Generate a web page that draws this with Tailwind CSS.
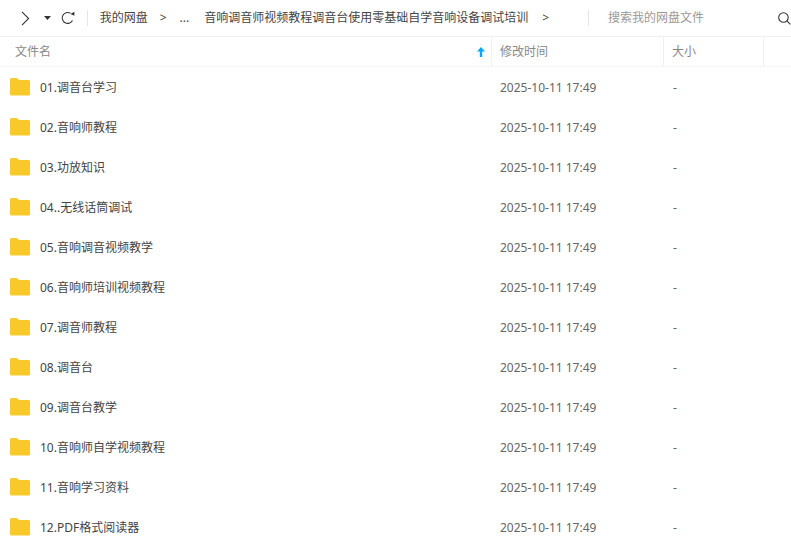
<!DOCTYPE html>
<html lang="zh-CN">
<head>
  <meta charset="UTF-8" />
  <title>我的网盘</title>
  <script src="https://cdn.jsdelivr.net/npm/@tailwindcss/browser@4"></script>
</head>
<body class="bg-white h-[543px] overflow-hidden font-['Noto_Sans','Noto_Sans_CJK_SC',sans-serif] text-[12px] text-[#444]">

  <!-- Toolbar -->
  <header class="flex items-center h-[37px] border-b border-[#f0f0f0] whitespace-nowrap text-[#444]">
    <svg class="ml-[21px] w-[9px] h-[15px]" viewBox="0 0 9 15" fill="none" stroke="#333" stroke-width="1.1"><path d="M1 .8l6.700 6.700L1 14.200"/></svg>
    <svg class="ml-[14px] w-[7px] h-[4px]" viewBox="0 0 7 4" fill="#333"><path d="M0 0h7L3.500 4z"/></svg>
    <svg class="ml-[10px] w-[14px] h-[14px]" viewBox="0 0 14 14" fill="none" stroke="#333" stroke-width="1.100"><path d="M11.600 9.500A5.500 5.500 0 1 1 9.500 2.200"/><path d="M9.500 3l4 1.800V.8z" fill="#333" stroke="none"/></svg>
    <div class="ml-[12px] w-px h-[16px] bg-[#e6e6e6]"></div>
    <span class="ml-[12px]">我的网盘</span>
    <span class="ml-[12px]">&gt;</span>
    <span class="ml-[13px]">...</span>
    <span class="ml-[15px]">音响调音师视频教程调音台使用零基础自学音响设备调试培训</span>
    <span class="ml-[14px]">&gt;</span>
    <div class="ml-[39px] w-px h-[16px] bg-[#e6e6e6]"></div>
    <span class="ml-[19px] text-[#999]">搜索我的网盘文件</span>
    <svg class="ml-[74px] w-[13px] h-[13px]" viewBox="0 0 13 13" fill="none" stroke="#333" stroke-width="1.100"><circle cx="5.500" cy="5.500" r="4.800"/><path d="M9 9l3.500 3.500"/></svg>
  </header>

  <!-- Column headers -->
  <div class="flex h-[30px] border-b border-[#f5f5f5] text-[#888]">
    <div class="w-[492px] flex items-center justify-between pl-[15px] pr-[6px] border-r border-[#f0f0f0]">
      <span>文件名</span>
      <svg class="w-[8px] h-[10px]" viewBox="0 0 8 10" fill="#06a7ff"><path d="M4 0l4 4.500H5.200V10H2.800V4.500H0z"/></svg>
    </div>
    <div class="w-[172px] flex items-center pl-[8px] border-r border-[#f0f0f0]">修改时间</div>
    <div class="w-[100px] flex items-center pl-[8px] border-r border-[#f0f0f0]">大小</div>
  </div>

  <!-- File rows -->
  <main id="files"></main>

  <script>
    const names = [
      "01.调音台学习", "02.音响师教程", "03.功放知识", "04..无线话筒调试",
      "05.音响调音视频教学", "06.音响师培训视频教程", "07.调音师教程", "08.调音台",
      "09.调音台教学", "10.音响师自学视频教程", "11.音响学习资料", "12.PDF格式阅读器"
    ];

    document.getElementById("files").innerHTML = names.map(name => `
      <div class="flex items-center h-[40px]">
        <div class="w-[492px] flex items-center pl-[10px] gap-[10px]">
          <svg class="w-[20px] h-[18px]" viewBox="0 0 20 18"><path d="M1.500 0h4.500q1 0 1.700.8L9 2H18.500a1.500 1.500 0 0 1 1.500 1.500V16a1.500 1.500 0 0 1-1.500 1.500h-17A1.500 1.500 0 0 1 0 16V1.500A1.500 1.500 0 0 1 1.500 0z" fill="#f9c92c"/></svg>
          <span class="mt-[2px]">${name}</span>
        </div>
        <div class="w-[172px] pl-[8px] mt-[2px] text-[#666]">2025-10-11 17:49</div>
        <div class="pl-[9px] mt-[2px] text-[#666]">-</div>
      </div>`).join("");
  </script>
</body>
</html>
